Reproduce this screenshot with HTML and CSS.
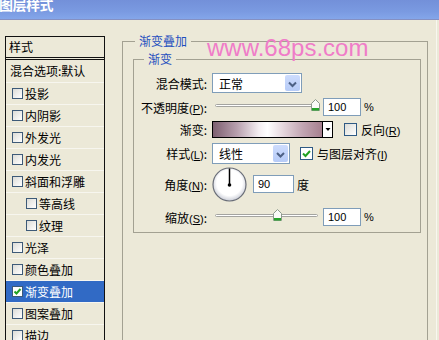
FILE: index.html
```html
<!DOCTYPE html>
<html>
<head>
<meta charset="utf-8">
<link rel="stylesheet" href="styles.css">
</head>
<body>
<div class="dialog">
  <div class="titlebar"><span class="title">图层样式</span></div>
  <div class="main">
    <div class="sidebar">
      <div class="side-head">样式</div>
      <div class="side-blend">混合选项:默认</div>
      <ul class="fx-list">
        <li class="fx"><span class="cb"></span>投影</li>
        <li class="fx"><span class="cb"></span>内阴影</li>
        <li class="fx"><span class="cb"></span>外发光</li>
        <li class="fx"><span class="cb"></span>内发光</li>
        <li class="fx"><span class="cb"></span>斜面和浮雕</li>
        <li class="fx sub"><span class="cb"></span>等高线</li>
        <li class="fx sub"><span class="cb"></span>纹理</li>
        <li class="fx"><span class="cb"></span>光泽</li>
        <li class="fx"><span class="cb"></span>颜色叠加</li>
        <li class="fx selected"><span class="cb checked"><svg width="9" height="9" viewBox="0 0 9 9"><path d="M1.5 4.5 L3.5 6.5 L7.5 2" fill="none" stroke="#21a121" stroke-width="2"/></svg></span>渐变叠加</li>
        <li class="fx"><span class="cb"></span>图案叠加</li>
        <li class="fx"><span class="cb"></span>描边</li>
      </ul>
    </div>
    <div class="content">
      <fieldset class="group outer">
        <legend>渐变叠加</legend>
        <fieldset class="group inner">
          <legend>渐变</legend>
          <div class="row r1">
            <span class="lbl">混合模式:</span>
            <div class="select sel-mode"><span class="sel-text">正常</span><span class="dd"><svg width="15" height="18" viewBox="0 0 15 18"><path d="M4 7.5 L7.5 11 L11 7.5" fill="none" stroke="#4d6185" stroke-width="2"/></svg></span></div>
          </div>
          <div class="row r2">
            <span class="lbl">不透明度<span class="mn">(<u>P</u>)</span>:</span>
            <div class="slider"><div class="track"></div><svg class="thumb" style="left:99px" width="9" height="12" viewBox="0 0 9 12"><path d="M0.5 4.5 L4.5 0.5 L8.5 4.5 V11.5 H0.5 Z" fill="#fbfbf8" stroke="#8d9a8d"/><rect x="1" y="9" width="7" height="2.5" fill="#27a32a"/></svg></div>
            <div class="num">100</div><span class="unit">%</span>
          </div>
          <div class="row r3">
            <span class="lbl">渐变:</span>
            <div class="grad"></div><div class="grad-dd"><svg width="8" height="15" viewBox="0 0 8 15"><path d="M1.5 6 H6.5 L4 9 Z" fill="#000"/></svg></div>
            <span class="cb big"></span><span class="cb-label">反向<span class="mn">(<u>R</u>)</span></span>
          </div>
          <div class="row r4">
            <span class="lbl">样式<span class="mn">(<u>L</u>)</span>:</span>
            <div class="select sel-style"><span class="sel-text">线性</span><span class="dd"><svg width="15" height="19" viewBox="0 0 15 19"><path d="M4 8 L7.5 11.5 L11 8" fill="none" stroke="#4d6185" stroke-width="2"/></svg></span></div>
            <span class="cb big checked"><svg width="11" height="11" viewBox="0 0 11 11"><path d="M2 5.5 L4.5 8 L9 3" fill="none" stroke="#21a121" stroke-width="2"/></svg></span><span class="cb-label">与图层对齐<span class="mn">(<u>I</u>)</span></span>
          </div>
          <div class="row r5">
            <span class="lbl">角度<span class="mn">(<u>N</u>)</span>:</span>
            <svg class="dial" width="35" height="35" viewBox="0 0 35 35">
              <defs><radialGradient id="dg" cx="50%" cy="45%" r="55%"><stop offset="0.7" stop-color="#ffffff"/><stop offset="1" stop-color="#c9ccd6"/></radialGradient></defs>
              <circle cx="17.5" cy="17.5" r="16.5" fill="url(#dg)" stroke="#6a6e78" stroke-width="1.2"/>
              <line x1="17.5" y1="18" x2="17.5" y2="1.5" stroke="#000" stroke-width="1.5"/>
              <circle cx="17.5" cy="18" r="1.8" fill="#000"/>
            </svg>
            <div class="num num-angle">90</div><span class="unit cjk">度</span>
          </div>
          <div class="row r6">
            <span class="lbl">缩放<span class="mn">(<u>S</u>)</span>:</span>
            <div class="slider"><div class="track"></div><svg class="thumb" style="left:61px" width="9" height="12" viewBox="0 0 9 12"><path d="M0.5 4.5 L4.5 0.5 L8.5 4.5 V11.5 H0.5 Z" fill="#fbfbf8" stroke="#8d9a8d"/><rect x="1" y="9" width="7" height="2.5" fill="#27a32a"/></svg></div>
            <div class="num">100</div><span class="unit">%</span>
          </div>
        </fieldset>
      </fieldset>
    </div>
    <div class="edge"></div>
  </div>
  <div class="watermark">www.68ps.com</div>
</div>
</body>
</html>
```
FILE: styles.css
```css
* { box-sizing: border-box; }
body {
  margin: 0;
  background: #ECE9D8;
  font-family: "Noto Sans CJK SC", "Liberation Sans", sans-serif;
  font-size: 12px;
  color: #000;
}
.dialog {
  position: relative;
  width: 439px;
  height: 340px;
  overflow: hidden;
  background: #ECE9D8;
}
.titlebar {
  height: 20px;
  background: linear-gradient(#7390d9, #7a9ae1 60%, #84a6ea);
  border-bottom: 1px solid #8590c2;
  overflow: hidden;
}
.title {
  display: block;
  color: #fff;
  font-weight: bold;
  font-size: 14px;
  line-height: 14px;
  margin: -3px 0 0 -1px;
  letter-spacing: -0.5px;
}
.main {
  display: flex;
  align-items: flex-start;
}
.sidebar {
  margin: 16px 0 0 5px;
  width: 100px;
  height: 330px;
  border: 1px solid #111;
  border-bottom: none;
  flex: none;
}
.side-head {
  height: 23px;
  line-height: 20px;
  padding-left: 3px;
  border-bottom: 3px double #111;
}
.side-blend {
  height: 23px;
  line-height: 22px;
  padding-left: 4px;
  border-bottom: 1px solid #f7f6ef;
}
.fx-list {
  list-style: none;
  margin: 0;
  padding: 0;
}
.fx {
  height: 22px;
  display: flex;
  align-items: center;
  padding-left: 6px;
  border-bottom: 1px solid #f7f6ef;
}
.fx.sub { padding-left: 20px; }
.fx.selected {
  background: #316AC5;
  color: #fff;
}
.cb {
  width: 11px;
  height: 11px;
  border: 1px solid #3d5a78;
  background: linear-gradient(135deg, #dcdcd7, #fff);
  margin-right: 2px;
  flex: none;
  display: flex;
  align-items: center;
  justify-content: center;
}
.cb.checked { background: #fff; }
.cb.big {
  width: 13px;
  height: 13px;
  border-color: #2f5a84;
}
.content {
  margin: 13px 0 0 17px;
  flex: none;
}
.group {
  margin: 0;
  padding: 0;
  border: 1px solid #a3a192;
  min-width: 0;
}
.group > legend {
  padding: 0 4px;
  font-size: 12px;
  line-height: 16px;
  color: #1f4fbf;
}
.outer {
  width: 306px;
  height: 330px;
}
.outer > legend { margin-left: 12px; }
.inner {
  width: 288px;
  margin: 2px 0 0 10px;
  padding: 6px 0 6px 0;
}
.inner > legend { margin-left: 10px; }
.row {
  display: flex;
  align-items: center;
}
.lbl {
  width: 73px;
  margin-right: 5px;
  text-align: right;
  flex: none;
  white-space: nowrap;
}
.mn {
  font-family: "Liberation Sans", sans-serif;
  font-size: 11px;
}
.r1 { height: 20px; }
.r2 { height: 18px; margin-top: 5px; }
.r3 { height: 17px; margin-top: 5px; }
.r4 { height: 21px; margin-top: 5px; }
.r5 { height: 34px; margin-top: 3px; }
.r6 { height: 18px; margin-top: 7px; }
.select {
  height: 100%;
  border: 1px solid #7f9db9;
  background: #fff;
  display: flex;
  align-items: center;
  padding: 1px 1px 1px 6px;
  flex: none;
}
.sel-mode { width: 90px; }
.sel-style { width: 78px; }
.sel-text { flex: 1; }
.dd {
  width: 15px;
  height: 100%;
  background: linear-gradient(#cddcfd, #b6cbf7);
  border-radius: 2px;
  display: flex;
}
.slider {
  position: relative;
  width: 109px;
  height: 18px;
  flex: none;
}
.track {
  margin: 6px 3px 0 3px;
  height: 3px;
  border: 1px solid #a4a4a0;
  background: #fff;
  border-radius: 2px;
}
.thumb {
  position: absolute;
  top: 1px;
}
.num {
  width: 38px;
  height: 18px;
  margin-left: 2px;
  border: 1px solid #7f9db9;
  background: #fff;
  font-family: "Liberation Sans", sans-serif;
  font-size: 11px;
  line-height: 16px;
  padding-left: 4px;
  flex: none;
}
.num-angle {
  width: 41px;
  margin-left: 6px;
}
.unit {
  margin-left: 3px;
  font-family: "Liberation Sans", sans-serif;
  font-size: 11px;
}
.unit.cjk {
  font-family: "Noto Sans CJK SC", sans-serif;
  font-size: 12px;
}
.grad {
  width: 111px;
  height: 17px;
  border: 1px solid #000;
  background: linear-gradient(to right, #7d5f70 0%, #b8a0ae 22%, #f4eef1 42%, #ffffff 50%, #e6d8de 64%, #c2a6b3 82%, #a6808f 100%);
  flex: none;
}
.grad-dd {
  width: 10px;
  height: 17px;
  border: 1px solid #000;
  border-left: none;
  background: #fff;
  flex: none;
  display: flex;
  justify-content: center;
}
.r3 .cb.big { margin-left: 11px; }
.r4 .cb.big { margin-left: 10px; }
.cb-label {
  margin-left: 2px;
  white-space: nowrap;
}
.dial { flex: none; }
.edge {
  width: 1px;
  height: 330px;
  margin-left: 8px;
  background: #f8f7f0;
  flex: none;
}
.watermark {
  position: absolute;
  left: 207px;
  top: 36px;
  font-family: "Liberation Sans", sans-serif;
  font-size: 24px;
  line-height: 24px;
  color: #f07cc8;
  white-space: nowrap;
}
```
